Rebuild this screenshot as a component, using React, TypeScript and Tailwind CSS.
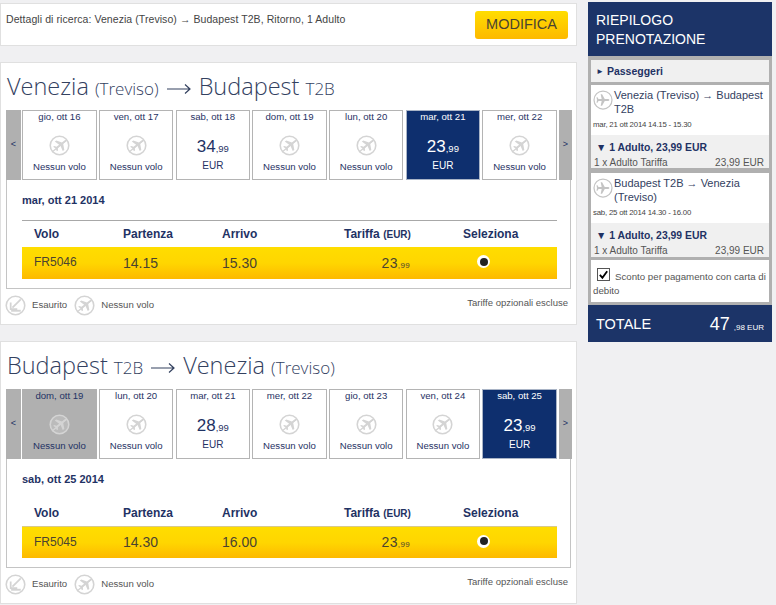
import React from 'react';

const navy = 'text-[#1f3264]';

const NoFlightIcon = ({ className = '' }: { className?: string }) => (
  <svg viewBox="0 0 24 24" className={className} fill="none">
    <circle cx="12" cy="12" r="10.6" stroke="#d4d4d4" strokeWidth="1.8" fill="#fff" fillOpacity="0.15" />
    <path d="M3.500 19.500 20 6" stroke="#d4d4d4" strokeWidth="1.500" />
    <path
      d="M19.500 5c1 .6.600 1.900-.3 2.600l-3 2.500 1.300 6.900-1.800 1.200-2.600-5.800-3 2.400.2 2.800-1.300.9-1.400-3.100-2.900-2 1.300-.9 2.600 1 3-2.400-5-3.700 1.800-1.200 6.400 2.400 2.900-2.400c.5-.4 1.100-.8 1.800-.2z"
      fill="#d4d4d4"
    />
  </svg>
);

const PlaneIcon = ({ className = '' }: { className?: string }) => (
  <svg viewBox="0 0 24 24" className={className} fill="none">
    <circle cx="12" cy="12" r="10.8" stroke="#c4c4c4" strokeWidth="1.500" fill="#fff" />
    <path
      d="M19.600 12c0 .8-1 1.200-1.900 1.200h-3.600l-3.200 5.600H9.200l1.200-5.600H6.600l-1.200 2H4.200l.6-3.200-.6-3.200h1.200l1.200 2h3.800L9.200 5.200h1.700l3.200 5.600h3.600c.9 0 1.900.4 1.900 1.200z"
      fill="#c4c4c4"
    />
  </svg>
);

const SoldOutIcon = ({ className = '' }: { className?: string }) => (
  <svg viewBox="0 0 24 24" className={className} fill="none">
    <circle cx="12" cy="12" r="10.6" stroke="#d4d4d4" strokeWidth="1.8" />
    <path d="M18 5 8.500 14.500" stroke="#d4d4d4" strokeWidth="2" />
    <path d="M6.500 8.500v7.500H14" stroke="#d4d4d4" strokeWidth="2" />
    <path d="M7 18h11" stroke="#d4d4d4" strokeWidth="2.200" />
  </svg>
);

const LongArrow = () => (
  <svg viewBox="0 0 24 12" className="mx-[8px] inline-block h-[12px] w-[24px] align-[0px]" fill="none">
    <path d="M0 6h23M18 1.500 23 6l-5 4.500" stroke="#33415f" strokeWidth="1.200" />
  </svg>
);

type Day = {
  label: string;
  whole?: string;
  cents?: string;
  selected?: boolean;
  disabled?: boolean;
};

const DayCell = ({ day }: { day: Day }) => {
  const bg = day.selected
    ? 'bg-[#0e2f6e] border-[#a9b4c6] text-white'
    : day.disabled
      ? 'bg-[#b0b0b0] border-[#b0b0b0] text-[#1f3264]'
      : 'bg-white border-[#b4b4b4] text-[#1f3264]';
  return (
    <div className={`flex h-[70px] flex-col items-center border text-[9.600px] leading-none ${bg}`}>
      <div className="h-[15px] leading-[12px]">{day.label}</div>
      {day.whole ? (
        <>
          <div className="mt-[11px] h-[20px] text-[17px] leading-[20px]">
            {day.whole}
            <span className="text-[9.500px]">,{day.cents}</span>
          </div>
          <div className="mt-[3px] text-[10px] leading-[12px]">EUR</div>
        </>
      ) : (
        <>
          <NoFlightIcon className="mt-[9px] h-[21px] w-[21px]" />
          <div className="mt-[5px] leading-[12px]">Nessun volo</div>
        </>
      )}
    </div>
  );
};

const Arrow = ({ char, className = '' }: { char: string; className?: string }) => (
  <div className={`flex h-[70px] items-center justify-center bg-[#b0b0b0] text-[9px] text-[#1f3264] ${className}`}>
    {char}
  </div>
);

type Leg = {
  title: React.ReactNode;
  days: Day[];
  date: string;
  code: string;
  dep: string;
  arr: string;
  divider: boolean;
};

const FlightCard = ({ leg }: { leg: Leg }) => (
  <section className="h-[263px] border border-[#e0e0e0] bg-white pl-[5px] pr-[5px]">
    <h2 className="ml-[1px] h-[47px] whitespace-pre font-['Open_Sans',sans-serif] text-[23.500px] font-light leading-[47px] text-[#33415f]">
      {leg.title}
    </h2>
    <div className="h-[179px] border-x border-b border-[#c4c4c4]">
      <div className="-mx-[1px] grid grid-cols-[14px_repeat(7,74.500px)_13px] gap-x-[2.200px]">
        <Arrow char="<" className="w-[15px]" />
        {leg.days.map((d) => (
          <DayCell key={d.label} day={d} />
        ))}
        <Arrow char=">" />
      </div>
      <div className="ml-[15px] mr-[13px] mt-[14px] h-[26px] text-[11px] font-bold leading-[13px] text-[#1f3264]">
        {leg.date}
        <div className={`mt-[13px] h-px ${leg.divider ? 'bg-[#a8a8a8]' : ''}`} />
      </div>
      <div className="ml-[15px] mr-[13px] mt-[7px]">
        <div className="grid h-[20px] grid-cols-[89px_99px_122px_119px_1fr] pl-[12px] text-[12px] font-bold leading-[14px] text-[#1f3264]">
          <div>Volo</div>
          <div>Partenza</div>
          <div>Arrivo</div>
          <div>
            Tariffa <span className="text-[10px]">(EUR)</span>
          </div>
          <div>Seleziona</div>
        </div>
        <div
          className={`grid h-[32px] grid-cols-[89px_99px_122px_119px_1fr] items-center bg-gradient-to-b from-[#ffdd00] via-[#ffd600] to-[#fdb900] pl-[12px] text-[#4a4330] ${leg.divider ? '' : 'border-t border-[#d8c98a]'}`}
        >
          <div className="-mt-[2px] text-[12px]">{leg.code}</div>
          <div className="text-[14px]">{leg.dep}</div>
          <div className="text-[14px]">{leg.arr}</div>
          <div className="w-[66px] text-right text-[14px] tracking-wide">
            23<span className="text-[8px]">,99</span>
          </div>
          <div className="-mt-[3px] pl-[14px]">
            <span className="flex h-[13px] w-[13px] items-center justify-center rounded-full bg-white">
              <span className="h-[8px] w-[8px] rounded-full bg-[#222]" />
            </span>
          </div>
        </div>
      </div>
    </div>
    <div className="flex h-[30px] items-center justify-between pt-[3px] text-[9.600px] text-[#555]">
      <div className="flex items-center">
        <SoldOutIcon className="-ml-[1px] h-[21px] w-[21px]" />
        <span className="ml-[6px]">Esaurito</span>
        <NoFlightIcon className="ml-[7px] h-[21px] w-[21px]" />
        <span className="ml-[6px]">Nessun volo</span>
      </div>
      <span className="-mt-[4px] mr-[3px] text-[9.500px]">Tariffe opzionali escluse</span>
    </div>
  </section>
);

const Small = ({ children }: { children: React.ReactNode }) => (
  <span className="text-[17px] font-light">{children}</span>
);

const outbound: Leg = {
  title: (
    <>
      Venezia <Small>(Treviso)</Small>
      <LongArrow />
      Budapest <Small>T2B</Small>
    </>
  ),
  days: [
    { label: 'gio, ott 16' },
    { label: 'ven, ott 17' },
    { label: 'sab, ott 18', whole: '34', cents: '99' },
    { label: 'dom, ott 19' },
    { label: 'lun, ott 20' },
    { label: 'mar, ott 21', whole: '23', cents: '99', selected: true },
    { label: 'mer, ott 22' },
  ],
  date: 'mar, ott 21 2014',
  code: 'FR5046',
  dep: '14.15',
  arr: '15.30',
  divider: true,
};

const inbound: Leg = {
  title: (
    <>
      Budapest <Small>T2B</Small>
      <LongArrow />
      Venezia <Small>(Treviso)</Small>
    </>
  ),
  days: [
    { label: 'dom, ott 19', disabled: true },
    { label: 'lun, ott 20' },
    { label: 'mar, ott 21', whole: '28', cents: '99' },
    { label: 'mer, ott 22' },
    { label: 'gio, ott 23' },
    { label: 'ven, ott 24' },
    { label: 'sab, ott 25', whole: '23', cents: '99', selected: true },
  ],
  date: 'sab, ott 25 2014',
  code: 'FR5045',
  dep: '14.30',
  arr: '16.00',
  divider: false,
};

const SummaryLeg = ({ title, when, h }: { title: string; when: string; h: string }) => (
  <>
    <div className="h-[50px] bg-white px-[2px]">
      <div className="flex pt-[3px]">
        <PlaneIcon className="mt-[2px] h-[20px] w-[20px] shrink-0" />
        <div className="ml-[1px] text-[11px] leading-[14px] text-[#33415f]">{title}</div>
      </div>
      <div className="mt-[4px] text-[7.800px] leading-[10px] tracking-[-0.2px] text-[#444]">{when}</div>
    </div>
    <div className={`${h} bg-[#f0f0f0] pl-[3px] pr-[5px] pt-[6px]`}>
      <div className={`ml-[2px] text-[10.400px] font-bold leading-[14px] ${navy}`}>▼ 1 Adulto, 23,99 EUR</div>
      <div className="mt-[1px] flex justify-between text-[10px] leading-[13px] text-[#555]">
        <span>1 x Adulto Tariffa</span>
        <span>23,99 EUR</span>
      </div>
    </div>
  </>
);

const Summary = () => (
  <aside className="mt-[2px] w-[184px]">
    <div className="h-[54px] bg-[#1c3468] px-[8px] pt-[9px] text-[14px] leading-[19px] text-white">
      RIEPILOGO
      <br />
      PRENOTAZIONE
    </div>
    <div className="flex flex-col gap-[3px] bg-[#b0b0b0] p-[3px] pt-[4px]">
      <div className={`flex h-[22px] items-center bg-[#f0f0f0] px-[5px] pt-[2px] text-[10.500px] font-bold ${navy}`}>
        <span className="mr-[3px] text-[8px]">►</span> Passeggeri
      </div>
      <div>
        <SummaryLeg title="Venezia (Treviso) → Budapest T2B" when="mar, 21 ott 2014 14.15 - 15.30" h="h-[33px]" />
      </div>
      <div className="mt-[2px]">
        <SummaryLeg title="Budapest T2B → Venezia (Treviso)" when="sab, 25 ott 2014 14.30 - 16.00" h="h-[34px]" />
      </div>
      <div className="h-[42px] bg-white px-[2px] text-[9.700px] leading-[14px] text-[#555]">
        <div className="flex items-center whitespace-nowrap pt-[10px]">
          <span className="ml-[4px] mr-[5px] -mt-[6px] flex h-[13px] w-[13px] shrink-0 items-center justify-center border border-[#555] bg-white">
            <svg viewBox="0 0 12 12" className="h-[11px] w-[11px]" fill="none">
              <path d="M2 6.500 4.800 9.500 10 2.500" stroke="#000" strokeWidth="2" />
            </svg>
          </span>
          Sconto per pagamento con carta di
        </div>
        <div>debito</div>
      </div>
    </div>
    <div className="flex h-[37px] items-center justify-between bg-[#1c3468] px-[8px] pt-[2px] text-white">
      <span className="text-[14.500px]">TOTALE</span>
      <span className="text-[18px]">
        47<span className="ml-[4px] text-[8px]">,98 EUR</span>
      </span>
    </div>
  </aside>
);

export default function App() {
  return (
    <div className="flex h-[605px] w-[776px] gap-[11px] overflow-hidden bg-[#f0f0f2] font-['Liberation_Sans',Arial,sans-serif]">
      <main className="flex w-[577px] flex-col gap-[16px] pt-[3px]">
        <div className="flex h-[43px] items-center justify-between border border-[#e0e0e0] bg-white pl-[5px] pr-[8px]">
          <span className="-mt-[9px] text-[10.500px] tracking-[0.07px] text-[#444]">
            Dettagli di ricerca: Venezia (Treviso) → Budapest T2B, Ritorno, 1 Adulto
          </span>
          <button className="h-[28px] w-[93px] rounded-[3px] bg-gradient-to-b from-[#ffdd00] to-[#fdb900] text-[14.500px] text-[#4a4330]">
            MODIFICA
          </button>
        </div>
        <FlightCard leg={outbound} />
        <FlightCard leg={inbound} />
      </main>
      <Summary />
    </div>
  );
}
